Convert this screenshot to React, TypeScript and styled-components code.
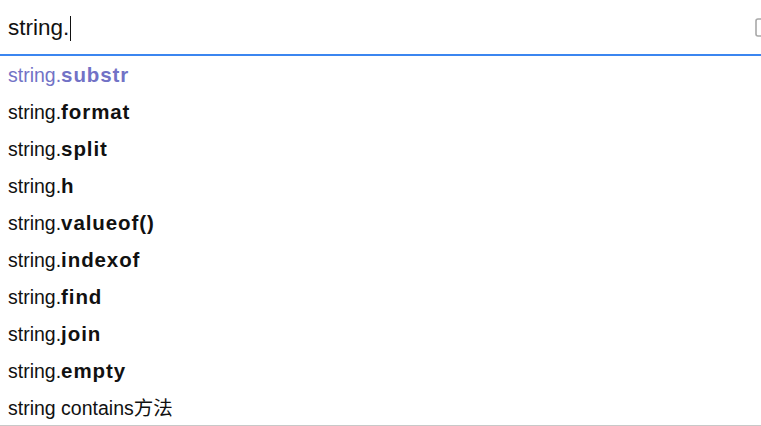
import styled, { createGlobalStyle } from 'styled-components';

const GlobalStyle = createGlobalStyle`
  html, body {
    margin: 0;
    padding: 0;
    background: #ffffff;
    overflow: hidden;
  }
  body {
    font-family: "Liberation Sans", Arial, "Noto Sans CJK SC", sans-serif;
  }
`;

const Page = styled.div`
  width: 761px;
  height: 426px;
  display: flex;
  flex-direction: column;
  overflow: hidden;
`;

const SearchBar = styled.div`
  height: 54px;
  flex: none;
  display: flex;
  align-items: center;
  justify-content: space-between;
  border-bottom: 2px solid #3b86f0;
  overflow: hidden;
`;

const Query = styled.div`
  display: flex;
  align-items: center;
  padding-left: 8px;
  padding-top: 2px;
  font-size: 22.5px;
  color: #111111;
`;

const Caret = styled.span`
  display: inline-block;
  width: 1px;
  height: 25px;
  margin-left: 1px;
  background: #111111;
`;

const Keyboard = styled.svg`
  flex: none;
  margin-right: -14px;
  margin-top: 2px;
`;

const List = styled.ul`
  list-style: none;
  margin: 0;
  padding: 0;
  flex: 1;
  min-height: 0;
  overflow: hidden;
  border-bottom: 1px solid #c8c8c8;
`;

const Item = styled.li<{ $active?: boolean }>`
  box-sizing: border-box;
  height: 37px;
  display: flex;
  align-items: center;
  padding: 1px 0 0 8px;
  font-size: 19.5px;
  line-height: 22px;
  color: ${({ $active }) => ($active ? '#7272c6' : '#111111')};
`;

const Strong = styled.b`
  font-weight: 700;
  font-size: 20.5px;
  letter-spacing: 0.9px;
`;

const suggestions: { base: string; rest: string }[] = [
  { base: 'string.', rest: 'substr' },
  { base: 'string.', rest: 'format' },
  { base: 'string.', rest: 'split' },
  { base: 'string.', rest: 'h' },
  { base: 'string.', rest: 'valueof()' },
  { base: 'string.', rest: 'indexof' },
  { base: 'string.', rest: 'find' },
  { base: 'string.', rest: 'join' },
  { base: 'string.', rest: 'empty' },
];

export default function App() {
  return (
    <Page>
      <GlobalStyle />
      <SearchBar>
        <Query>
          string.
          <Caret />
        </Query>
        <Keyboard width="20" height="20" viewBox="0 0 20 20">
          <rect x="1" y="1" width="18" height="17" rx="2" fill="none" stroke="#a8a8a8" strokeWidth="1.6" />
        </Keyboard>
      </SearchBar>
      <List>
        {suggestions.map((s, i) => (
          <Item key={s.rest} $active={i === 0}>
            {s.base}
            <Strong>{s.rest}</Strong>
          </Item>
        ))}
        <Item>string contains方法</Item>
      </List>
    </Page>
  );
}
